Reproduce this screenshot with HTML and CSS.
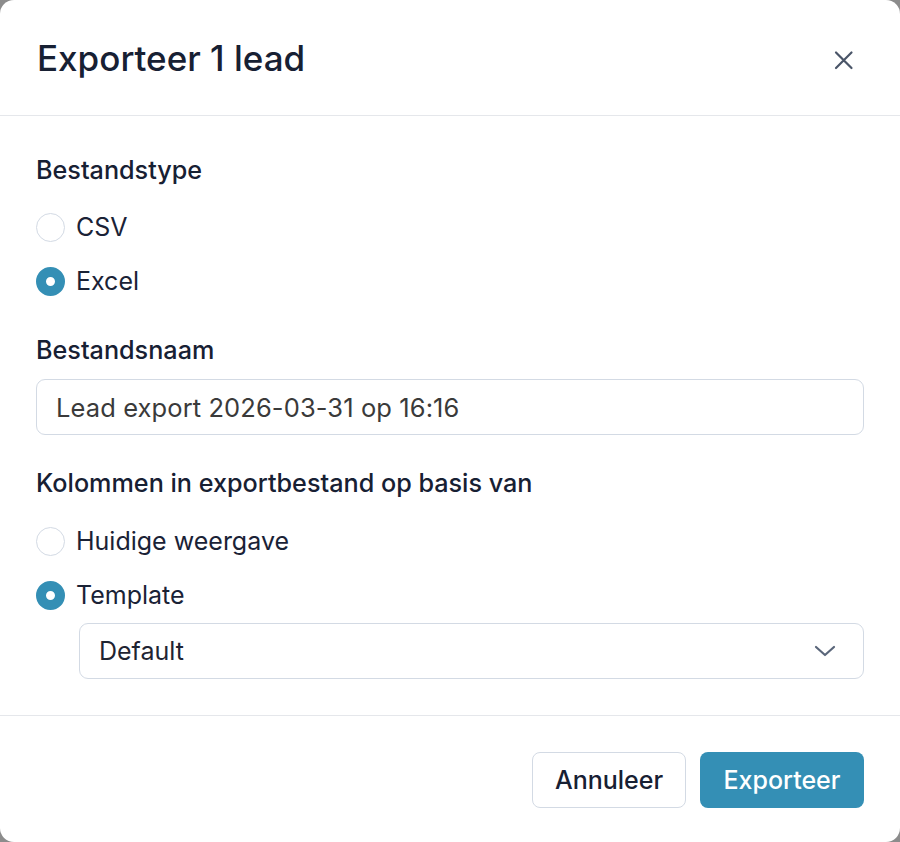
FILE: index.html
```html
<!DOCTYPE html>
<html lang="nl">
<head>
<meta charset="utf-8">
<title>Exporteer 1 lead</title>
<link rel="stylesheet" href="styles.css">
</head>
<body>
<div class="modal">
  <header class="modal-header">
    <h1 class="title">Exporteer 1 lead</h1>
    <button class="close" aria-label="Sluiten">
      <svg width="20" height="20" viewBox="0 0 20 20" fill="none" stroke="#4a5568" stroke-width="2.2" stroke-linecap="round"><path d="M2 2.5 L17.5 18 M17.5 2.5 L2 18"/></svg>
    </button>
  </header>
  <section class="modal-body">
    <div class="field-label first">Bestandstype</div>
    <div class="radio-group">
      <label class="radio-row"><span class="radio"></span><span class="radio-text">CSV</span></label>
      <label class="radio-row"><span class="radio checked"></span><span class="radio-text">Excel</span></label>
    </div>
    <div class="field-label">Bestandsnaam</div>
    <div class="input">Lead export 2026-03-31 op 16:16</div>
    <div class="field-label after-input">Kolommen in exportbestand op basis van</div>
    <div class="radio-group">
      <label class="radio-row"><span class="radio"></span><span class="radio-text">Huidige weergave</span></label>
      <label class="radio-row"><span class="radio checked"></span><span class="radio-text">Template</span></label>
    </div>
    <div class="select">
      <span>Default</span>
      <svg width="22" height="12" viewBox="0 0 22 12" fill="none" stroke="#5a667a" stroke-width="2.2" stroke-linecap="round" stroke-linejoin="round"><path d="M2 2 L11 10 L20 2"/></svg>
    </div>
  </section>
  <footer class="modal-footer">
    <button class="btn btn-secondary">Annuleer</button>
    <button class="btn btn-primary">Exporteer</button>
  </footer>
</div>
</body>
</html>
```

FILE: styles.css
```css
* { box-sizing: border-box; }
html, body { margin: 0; padding: 0; }
body {
  background: #8c8c8c;
  font-family: Inter, "Noto Sans", sans-serif;
  color: #172033;
  width: 900px;
  height: 842px;
  overflow: hidden;
}
.modal {
  width: 900px;
  height: 842px;
  background: #fff;
  border-radius: 14px;
  display: flex;
  flex-direction: column;
}
.modal-header {
  display: flex;
  align-items: center;
  justify-content: space-between;
  padding: 0 36px 0 37px;
  height: 116px;
  flex: none;
  border-bottom: 1px solid #e5e7eb;
}
.title {
  margin: 0;
  font-size: 35px;
  font-weight: 500;
  line-height: 42px;
  color: #172033;
}
.close {
  background: none;
  border: 0;
  padding: 0;
  width: 40px;
  height: 40px;
  display: flex;
  align-items: center;
  justify-content: center;
  margin-top: 4px;
}
.modal-body {
  padding: 39px 36px 36px 36px;
  border-bottom: 1px solid #e5e7eb;
  display: flex;
  flex-direction: column;
  flex: none;
}
.field-label {
  font-size: 25.2px;
  font-weight: 500;
  line-height: 30px;
  margin-top: 39px;
  color: #172033;
}
.field-label.first { margin-top: 0; }
.field-label.after-input { margin-top: 33px; }
.radio-group {
  display: flex;
  flex-direction: column;
  gap: 24px;
  margin-top: 27px;
}
.field-label.after-input + .radio-group { margin-top: 28px; }
.radio-row {
  display: flex;
  align-items: center;
  height: 30px;
  gap: 11px;
}
.radio {
  width: 29px;
  height: 29px;
  border-radius: 50%;
  border: 1px solid #d3dae4;
  background: #fff;
  flex: none;
}
.radio.checked {
  border: 10.5px solid #348fb5;
  background: #fff;
}
.radio-text {
  font-size: 25px;
  line-height: 30px;
  color: #1a2236;
}
.input {
  margin-top: 14px;
  height: 56px;
  border: 1px solid #d3dae4;
  border-radius: 9px;
  padding: 0 19px;
  display: flex;
  align-items: center;
  font-size: 25.5px;
  letter-spacing: 0.1px;
  color: #3a3a3a;
}
.select {
  margin: 13px 0 0 43px;
  height: 56px;
  border: 1px solid #d3dae4;
  border-radius: 9px;
  padding: 0 27px 0 19px;
  display: flex;
  align-items: center;
  justify-content: space-between;
  font-size: 25px;
  color: #1f2432;
}
.modal-footer {
  display: flex;
  justify-content: flex-end;
  gap: 14px;
  padding: 36px 36px 0;
}
.btn {
  height: 56px;
  border-radius: 8px;
  font-family: Inter, "Noto Sans", sans-serif;
  font-size: 25px;
  font-weight: 500;
  padding: 0;
}
.btn-secondary {
  background: #fff;
  border: 1px solid #d3dae4;
  color: #172033;
  width: 154px;
}
.btn-primary {
  background: #348fb5;
  border: 0;
  color: #fff;
  width: 164px;
}
```
